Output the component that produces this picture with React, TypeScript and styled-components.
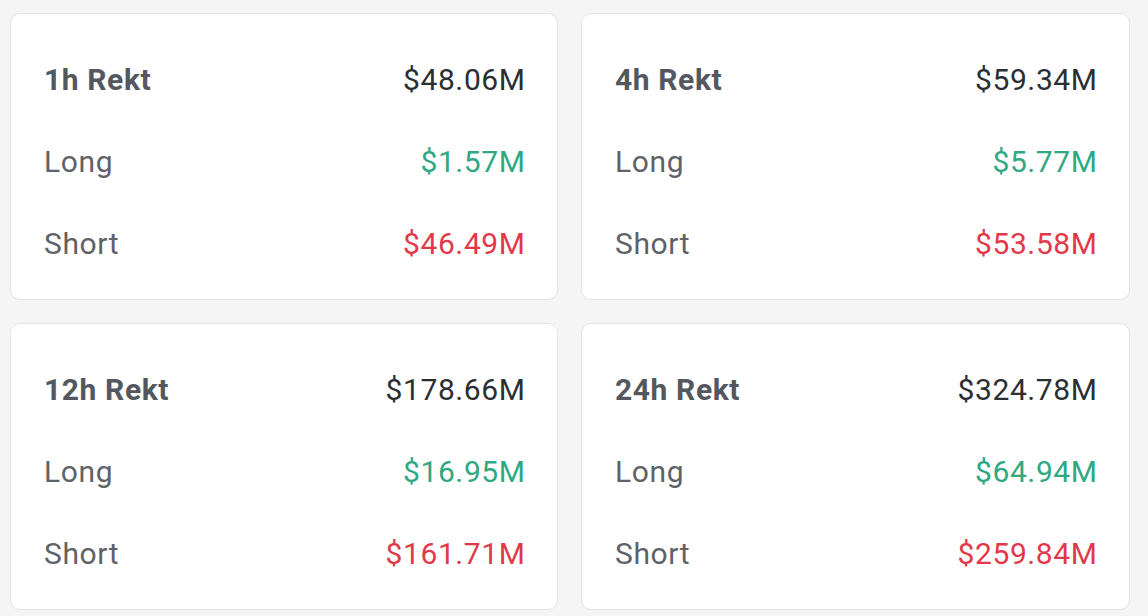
import React from "react";
import styled, { createGlobalStyle } from "styled-components";

const Global = createGlobalStyle`
  html, body { margin: 0; padding: 0; background: #f5f5f5; }
  body { font-family: Roboto, "Noto Sans", sans-serif; }
`;

const Grid = styled.div`
  display: grid;
  grid-template-columns: 548px 549px;
  gap: 23px;
  padding: 13px 18px 6px 10px;
`;

const Card = styled.div`
  box-sizing: border-box;
  height: 287px;
  background: #ffffff;
  border: 1px solid #e4e4e4;
  border-radius: 10px;
  padding: 44px 32px 33px 33px;
  display: flex;
  flex-direction: column;
  gap: 38px;
`;

const Row = styled.div`
  display: flex;
  justify-content: space-between;
  align-items: center;
  height: 44px;
  font-size: 30px;
  line-height: 44px;
  letter-spacing: 0.6px;
`;

const Label = styled.span<{ $bold?: boolean }>`
  color: ${(p) => (p.$bold ? "#54585e" : "#5f6266")};
  font-weight: ${(p) => (p.$bold ? 700 : 400)};
`;

const Value = styled.span<{ $tone: "total" | "long" | "short" }>`
  margin-right: -0.6px;
  color: ${(p) =>
    p.$tone === "long" ? "#2fa883" : p.$tone === "short" ? "#e2394a" : "#2b2f33"};
`;

const data = [
  { title: "1h Rekt", total: "$48.06M", long: "$1.57M", short: "$46.49M" },
  { title: "4h Rekt", total: "$59.34M", long: "$5.77M", short: "$53.58M" },
  { title: "12h Rekt", total: "$178.66M", long: "$16.95M", short: "$161.71M" },
  { title: "24h Rekt", total: "$324.78M", long: "$64.94M", short: "$259.84M" },
];

export default function App() {
  return (
    <>
      <Global />
      <Grid>
        {data.map((d) => (
          <Card key={d.title}>
            <Row>
              <Label $bold>{d.title}</Label>
              <Value $tone="total">{d.total}</Value>
            </Row>
            <Row>
              <Label>Long</Label>
              <Value $tone="long">{d.long}</Value>
            </Row>
            <Row>
              <Label>Short</Label>
              <Value $tone="short">{d.short}</Value>
            </Row>
          </Card>
        ))}
      </Grid>
    </>
  );
}
